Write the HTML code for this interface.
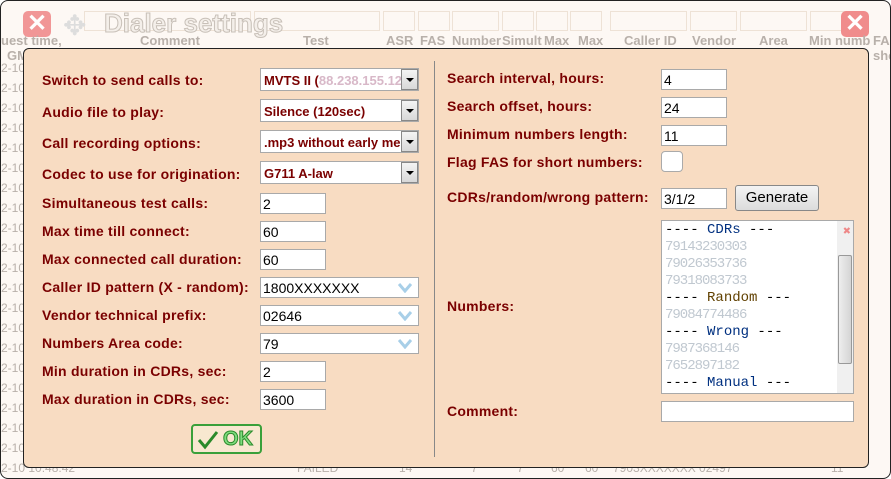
<!DOCTYPE html>
<html><head><meta charset="utf-8"><style>
*{box-sizing:border-box;margin:0;padding:0}
body{width:891px;height:479px;overflow:hidden;background:#fff;font-family:"Liberation Sans",Arial,sans-serif;position:relative}
.win{position:absolute;left:0;top:0;width:891px;height:479px;border:1px solid #222;border-radius:8px;background:#fdf8f4;overflow:hidden}
.a{position:absolute}
.hd{color:#b8b0aa;font-size:13px;font-weight:bold;top:32px}
.cell{position:absolute;top:10px;height:20px;border:1px solid #eee2d6;background:#fdf8f4}
.dlg{position:absolute;left:22px;top:47px;width:846px;height:420px;background:#f8dcc2;border:1px solid #222;border-radius:6px}
.l{position:absolute;color:#7a0000;font-weight:bold;font-size:14px;letter-spacing:0.25px;white-space:nowrap}
.in{position:absolute;background:#fff;border:1px solid #a9a9a9;height:21px;font-size:14px;padding:2px 2px;color:#000;white-space:nowrap;overflow:hidden}
.sel{position:absolute;background:#fff;border:1px solid #a9a9a9;height:23px;font-size:13px;font-weight:bold;color:#7a0000;padding:4px 3px;white-space:nowrap;overflow:hidden}
.sel b{position:absolute;right:0;top:0;width:17px;height:21px;border:1px solid #888;background:linear-gradient(#f4f4f4,#d8d8d8)}
.sel b:after{content:"";position:absolute;left:4px;top:8px;border-left:4px solid transparent;border-right:4px solid transparent;border-top:4px solid #000}
.dd{position:absolute;right:6px;top:5px;width:14px;height:10px}
.rows div{position:absolute;left:0;font-size:12px;color:#b8b0aa}
</style></head><body>
<div class="win">
<div class="cell" style="left:83px;width:167px"></div>
<div class="cell" style="left:253px;width:126px"></div>
<div class="cell" style="left:382px;width:32px"></div>
<div class="cell" style="left:417px;width:32px"></div>
<div class="cell" style="left:451px;width:47px"></div>
<div class="cell" style="left:501px;width:32px"></div>
<div class="cell" style="left:535px;width:32px"></div>
<div class="cell" style="left:569px;width:32px"></div>
<div class="cell" style="left:609px;width:77px"></div>
<div class="cell" style="left:689px;width:47px"></div>
<div class="cell" style="left:739px;width:67px"></div>
<div class="cell" style="left:809px;width:50px"></div>
<div class="a" style="left:22px;top:10px;width:28px;height:26px;border-radius:5px;background:#f08c8c;opacity:.9;color:#fff;font-size:24px;font-weight:bold;text-align:center;line-height:26px">✕</div>
<div class="a" style="left:62px;top:8px;font-size:28px;color:#ddd">✥</div>
<div class="a" style="left:103px;top:7px;font-size:26px;font-weight:bold;color:#f4efea;-webkit-text-stroke:1px #c8c0b8">Dialer settings</div>
<div class="a" style="left:840px;top:10px;width:28px;height:26px;border-radius:5px;background:#f08c8c;color:#fff;font-size:24px;font-weight:bold;text-align:center;line-height:26px">✕</div>
<div class="a hd" style="left:0">uest time,</div><div class="a hd" style="left:6px;top:47px">GM</div>
<div class="a hd" style="left:139px">Comment</div>
<div class="a hd" style="left:302px">Test</div>
<div class="a hd" style="left:385px">ASR</div>
<div class="a hd" style="left:419px">FAS</div>
<div class="a hd" style="left:451px">Number</div>
<div class="a hd" style="left:501px">Simult</div>
<div class="a hd" style="left:543px">Max</div>
<div class="a hd" style="left:577px">Max</div>
<div class="a hd" style="left:623px">Caller ID</div>
<div class="a hd" style="left:691px">Vendor</div>
<div class="a hd" style="left:758px">Area</div>
<div class="a hd" style="left:808px">Min numb</div>
<div class="a hd" style="left:872px">FA<br>sho</div>
<div class="rows">
<div style="top:60px">2-10</div><div style="top:80px">2-10</div><div style="top:100px">2-10</div><div style="top:120px">2-10</div><div style="top:140px">2-10</div><div style="top:160px">2-10</div><div style="top:180px">2-10</div><div style="top:200px">2-10</div><div style="top:220px">2-10</div><div style="top:240px">2-10</div><div style="top:260px">2-10</div><div style="top:280px">2-10</div><div style="top:300px">2-10</div><div style="top:320px">2-10</div><div style="top:340px">2-10</div><div style="top:360px">2-10</div><div style="top:380px">2-10</div><div style="top:400px">2-10</div><div style="top:420px">2-10</div><div style="top:440px">2-10</div><div style="top:460px">2-10 10:48:42</div>
<div style="top:460px;left:296px">FAILED</div><div style="top:460px;left:398px">14</div><div style="top:460px;left:470px">7</div><div style="top:460px;left:516px">7</div><div style="top:460px;left:550px">60</div><div style="top:460px;left:584px">60</div><div style="top:460px;left:612px">7903XXXXXXX 02497</div><div style="top:460px;left:830px">11</div>
</div>
<div class="dlg">
<div class="a" style="left:410px;top:12px;width:1px;height:396px;background:#888"></div>
</div>

<div class="l" style="left:41px;top:71px">Switch to send calls to:</div>
<div class="l" style="left:41px;top:103px">Audio file to play:</div>
<div class="l" style="left:41px;top:134px">Call recording options:</div>
<div class="l" style="left:41px;top:165px">Codec to use for origination:</div>
<div class="l" style="left:41px;top:194px">Simultaneous test calls:</div>
<div class="l" style="left:41px;top:222px">Max time till connect:</div>
<div class="l" style="left:41px;top:250px">Max connected call duration:</div>
<div class="l" style="left:41px;top:278px">Caller ID pattern (X - random):</div>
<div class="l" style="left:41px;top:306px">Vendor technical prefix:</div>
<div class="l" style="left:41px;top:334px">Numbers Area code:</div>
<div class="l" style="left:41px;top:362px">Min duration in CDRs, sec:</div>
<div class="l" style="left:41px;top:390px">Max duration in CDRs, sec:</div>

<div class="sel" style="left:259px;top:67px;width:159px">MVTS II (<span style="color:#d8b8c8">88.238.155.124</span>)<b></b></div>
<div class="sel" style="left:259px;top:98px;width:159px">Silence (120sec)<b></b></div>
<div class="sel" style="left:259px;top:129px;width:159px">.mp3 without early media<b></b></div>
<div class="sel" style="left:259px;top:160px;width:159px">G711 A-law<b></b></div>
<div class="in" style="left:259px;top:192px;width:66px">2</div>
<div class="in" style="left:259px;top:220px;width:66px">60</div>
<div class="in" style="left:259px;top:248px;width:66px">60</div>
<div class="in" style="left:259px;top:276px;width:159px">1800XXXXXXX<svg class="dd" viewBox="0 0 14 10"><path d="M1 1L7 8L13 1" fill="none" stroke="#a8cfe8" stroke-width="3"/></svg></div>
<div class="in" style="left:259px;top:304px;width:159px">02646<svg class="dd" viewBox="0 0 14 10"><path d="M1 1L7 8L13 1" fill="none" stroke="#a8cfe8" stroke-width="3"/></svg></div>
<div class="in" style="left:259px;top:332px;width:159px">79<svg class="dd" viewBox="0 0 14 10"><path d="M1 1L7 8L13 1" fill="none" stroke="#a8cfe8" stroke-width="3"/></svg></div>
<div class="in" style="left:259px;top:360px;width:66px">2</div>
<div class="in" style="left:259px;top:388px;width:66px">3600</div>

<div class="a" style="left:190px;top:423px;width:71px;height:30px;border:2px solid #3aa03a;border-radius:4px;background:#f8e8d0">
<svg class="a" style="left:4px;top:4px" width="22" height="20" viewBox="0 0 22 20"><path d="M2 10L8 17L20 2" fill="none" stroke="#2a8a2a" stroke-width="3"/></svg>
<span class="a" style="left:30px;top:2px;font-size:20px;font-weight:bold;color:#7fdc7f;-webkit-text-stroke:1px #2a8a2a">OK</span></div>

<div class="l" style="left:446px;top:69px">Search interval, hours:</div>
<div class="l" style="left:446px;top:97px">Search offset, hours:</div>
<div class="l" style="left:446px;top:125px">Minimum numbers length:</div>
<div class="l" style="left:446px;top:153px">Flag FAS for short numbers:</div>
<div class="l" style="left:446px;top:188px">CDRs/random/wrong pattern:</div>
<div class="l" style="left:446px;top:297px">Numbers:</div>
<div class="l" style="left:446px;top:402px">Comment:</div>

<div class="in" style="left:660px;top:68px;width:66px">4</div>
<div class="in" style="left:660px;top:96px;width:66px">24</div>
<div class="in" style="left:660px;top:124px;width:66px">11</div>
<div class="a" style="left:660px;top:150px;width:22px;height:21px;border:1px solid #aaa;border-radius:4px;background:#fff"></div>
<div class="in" style="left:660px;top:187px;width:66px">3/1/2</div>
<div class="a" style="left:734px;top:184px;width:84px;height:26px;border:1px solid #888;border-radius:3px;background:linear-gradient(#f4f4f4,#dcdcdc);font-size:15px;text-align:center;line-height:24px">Generate</div>

<div class="a" style="left:660px;top:219px;width:193px;height:174px;border:1px solid #a9a9a9;background:#fff;font-family:'Liberation Mono',monospace;font-size:14px;line-height:17px;padding:1px 3px;color:#000;overflow:hidden">
---- <span style="color:#003080">CDRs</span> ---<br><span style="color:#c0c8d0;letter-spacing:-1px">79143230303</span><br><span style="color:#c0c8d0;letter-spacing:-1px">79026353736</span><br><span style="color:#c0c8d0;letter-spacing:-1px">79318083733</span><br>---- <span style="color:#604000">Random</span> ---<br><span style="color:#c0c8d0;letter-spacing:-1px">79084774486</span><br>---- <span style="color:#003080">Wrong</span> ---<br><span style="color:#c0c8d0;letter-spacing:-1px">7987368146</span><br><span style="color:#c0c8d0;letter-spacing:-1px">7652897182</span><br>---- <span style="color:#003080">Manual</span> ---
<div class="a" style="right:0;top:0;width:16px;height:172px;background:#f0f0f0"></div>
<div class="a" style="right:1px;top:34px;width:14px;height:109px;border:1px solid #999;border-radius:2px;background:linear-gradient(90deg,#eee,#d4d4d4)"></div>
<div class="a" style="right:2px;top:2px;color:#e88;font-size:13px">✖</div>
</div>
<div class="in" style="left:660px;top:400px;width:193px"></div>
</div>
</body></html>
